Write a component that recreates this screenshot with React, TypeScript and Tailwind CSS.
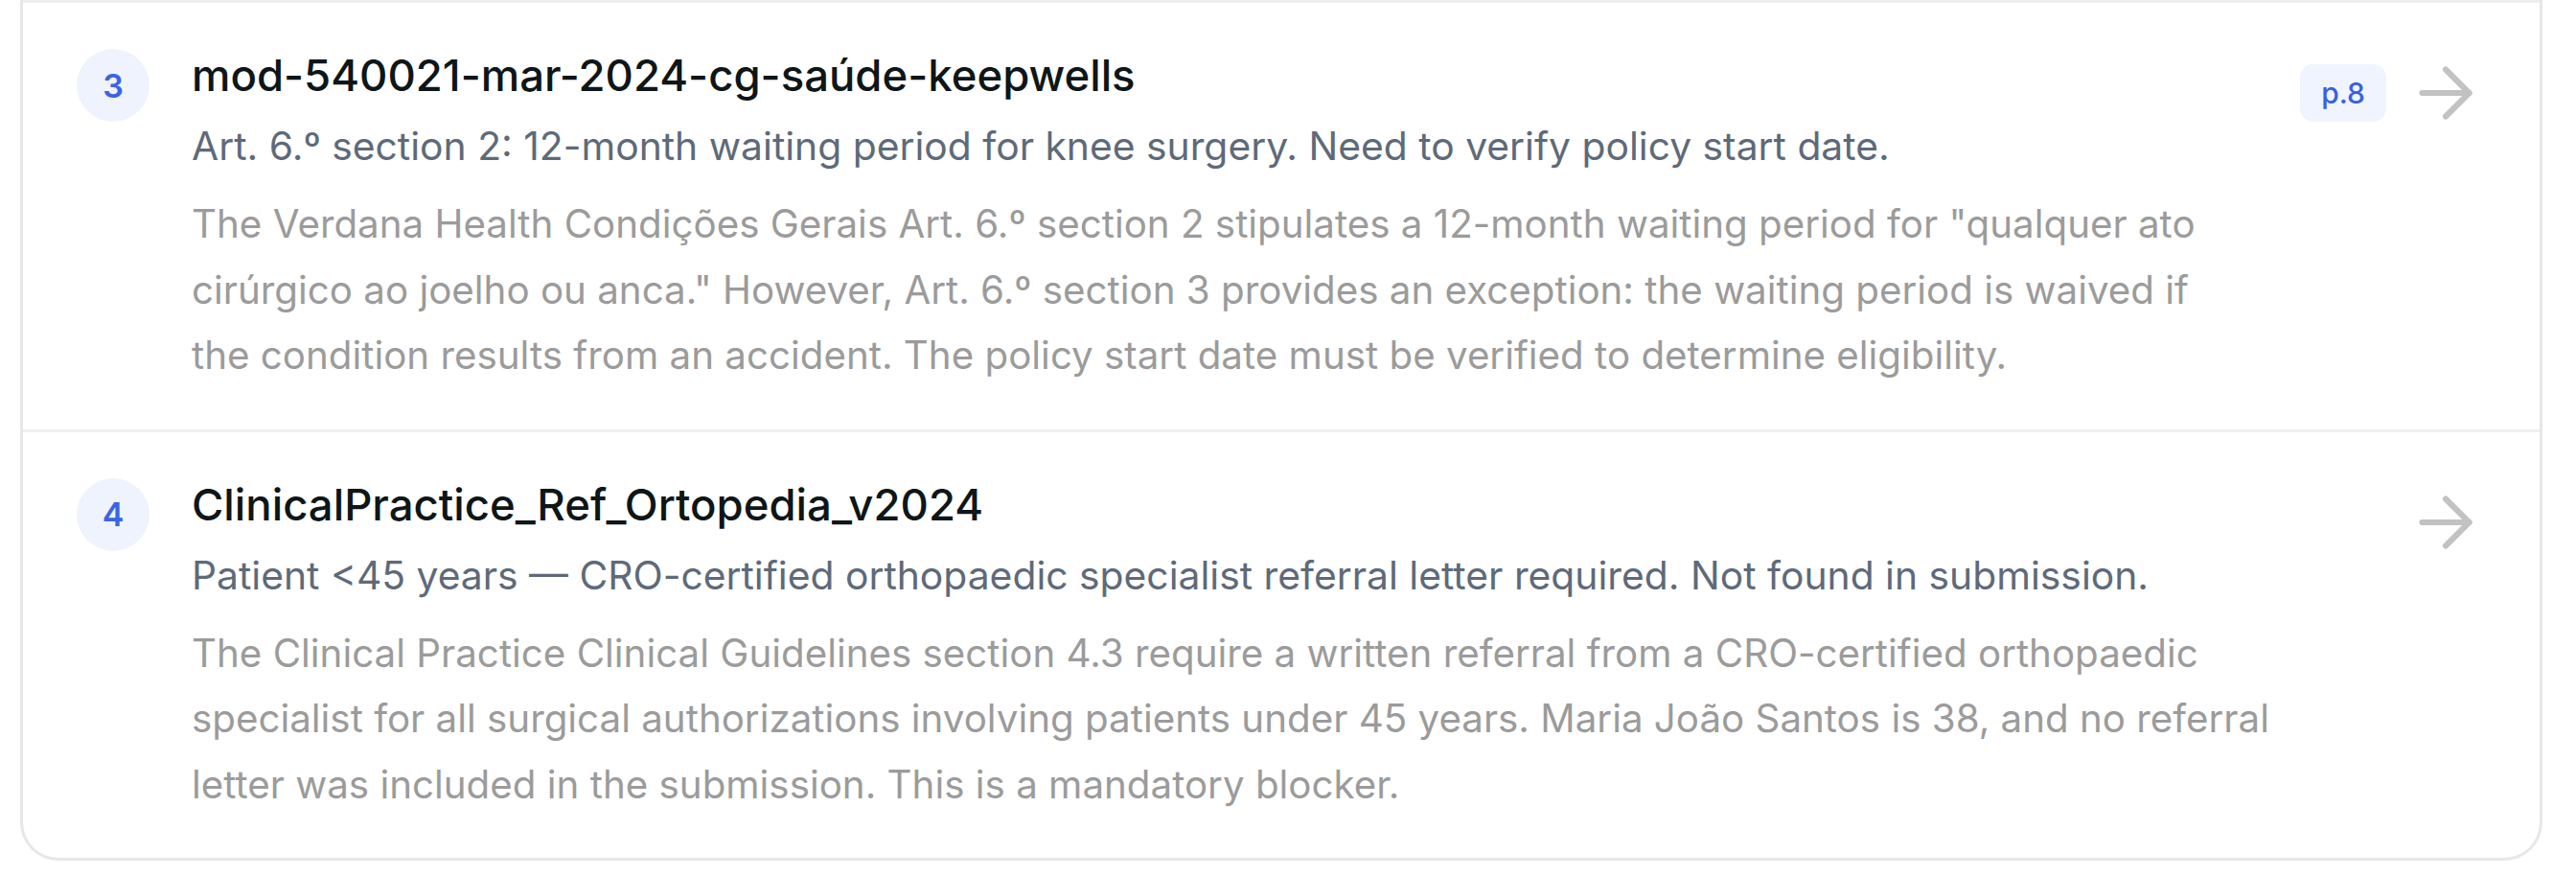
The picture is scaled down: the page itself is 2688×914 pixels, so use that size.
import { ArrowRight } from "lucide-react";

interface Finding {
  index: number;
  source: string;
  summary: string;
  detail: string;
  page?: string;
}

const FINDINGS: Finding[] = [
  {
    index: 3,
    source: "mod-540021-mar-2024-cg-saúde-keepwells",
    summary:
      "Art. 6.º section 2: 12-month waiting period for knee surgery. Need to verify policy start date.",
    detail:
      'The Verdana Health Condições Gerais Art. 6.º section 2 stipulates a 12-month waiting period for "qualquer ato cirúrgico ao joelho ou anca." However, Art. 6.º section 3 provides an exception: the waiting period is waived if the condition results from an accident. The policy start date must be verified to determine eligibility.',
    page: "p.8",
  },
  {
    index: 4,
    source: "ClinicalPractice_Ref_Ortopedia_v2024",
    summary:
      "Patient <45 years — CRO-certified orthopaedic specialist referral letter required. Not found in submission.",
    detail:
      "The Clinical Practice Clinical Guidelines section 4.3 require a written referral from a CRO-certified orthopaedic specialist for all surgical authorizations involving patients under 45 years. Maria João Santos is 38, and no referral letter was included in the submission. This is a mandatory blocker.",
  },
];

function FindingRow({ finding }: { finding: Finding }) {
  return (
    <div className="flex items-start border-t-[3px] border-[#efefef] pl-[56px] pr-[56px] pt-[48px] pb-[42px]">
      <div className="flex h-[76px] w-[76px] shrink-0 items-center justify-center rounded-full bg-[#eef3fd] text-[34px] font-semibold text-[#3b64e4]">
        {finding.index}
      </div>
      <div className="ml-[44px] min-w-0 flex-1">
        <h3 className="text-[45.5px] leading-[56px] font-medium text-[#0e1618]">
          {finding.source}
        </h3>
        <p className="mt-[15px] text-[40.8px] leading-[60px] text-[#5e6a79]">
          {finding.summary}
        </p>
        <p className="mt-[18px] text-[40.3px] leading-[68.5px] text-[#9b9b9b]">
          {finding.detail}
        </p>
      </div>
      <div className="ml-[48px] flex shrink-0 items-center gap-[20px] pt-[4px]">
        {finding.page && (
          <span className="flex h-[60px] items-center rounded-[14px] bg-[#eff4fe] px-[22px] text-[30px] font-medium text-[#3960e0]">
            {finding.page}
          </span>
        )}
        <ArrowRight size={84} strokeWidth={1.75} className="text-[#c2c2c2]" />
      </div>
    </div>
  );
}

export default function App() {
  return (
    <div
      className="min-h-screen bg-white pl-[21px] pr-[35px] pb-[15px]"
      style={{ fontFamily: "Inter, 'Noto Sans', sans-serif" }}
    >
      <div className="overflow-hidden rounded-b-[40px] border-x-[3px] border-b-[3px] border-[#e7e7e7] bg-white">
        {FINDINGS.map((f) => (
          <FindingRow key={f.index} finding={f} />
        ))}
      </div>
    </div>
  );
}
